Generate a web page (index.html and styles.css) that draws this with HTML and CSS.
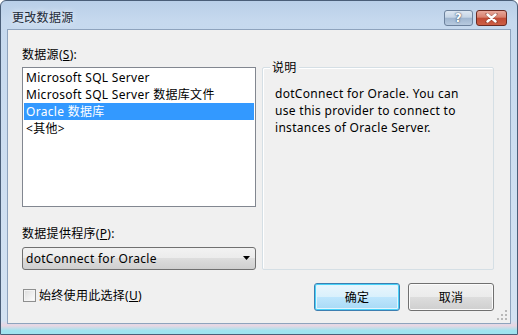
FILE: index.html
```html
<!DOCTYPE html>
<html lang="zh-CN">
<head>
    <meta charset="UTF-8">
    <title>更改数据源</title>
    <link rel="stylesheet" href="styles.css">
</head>
<body>
    <div class="window">
        <!-- Title bar -->
        <div class="titlebar">
            <div class="title">更改数据源</div>
            <div class="caption-buttons">
                <div class="cap-btn help">?</div>
                <div class="cap-btn close">
                    <svg width="13" height="10" viewBox="0 0 13 10">
                        <path d="M2 1 L11 9 M11 1 L2 9" stroke="#3b1a14" stroke-width="3.4" stroke-linecap="round" opacity="0.35"/>
                        <path d="M2.5 1.5 L10.5 8.5 M10.5 1.5 L2.5 8.5" stroke="#fff" stroke-width="2.4" stroke-linecap="round"/>
                    </svg>
                </div>
            </div>
        </div>

        <!-- Client area -->
        <div class="client">
            <div class="main">
                <div class="left-col">
                    <div class="label">数据源(<u>S</u>):</div>
                    <div class="listbox">
                        <div class="item">Microsoft SQL Server</div>
                        <div class="item">Microsoft SQL Server 数据库文件</div>
                        <div class="item selected">Oracle 数据库</div>
                        <div class="item">&lt;其他&gt;</div>
                    </div>
                    <div class="label provider-label">数据提供程序(<u>P</u>):</div>
                    <div class="combo">
                        <span>dotConnect for Oracle</span>
                        <svg width="8" height="5" viewBox="0 0 8 5"><path d="M0 0 H7 L3.5 4 Z" fill="#000"/></svg>
                    </div>
                </div>

                <div class="groupbox">
                    <div class="group-title">说明</div>
                    <div class="group-text">dotConnect for Oracle. You can use this provider to connect to instances of Oracle Server.</div>
                </div>
            </div>

            <div class="footer">
                <label class="check">
                    <span class="checkbox"></span>
                    <span>始终使用此选择(<u>U</u>)</span>
                </label>
                <div class="buttons">
                    <div class="btn default">确定</div>
                    <div class="btn">取消</div>
                </div>
            </div>

            <svg class="grip" width="11" height="11" viewBox="0 0 11 11">
                <g fill="#b8b8b8">
                    <rect x="8" y="0" width="2" height="2"/>
                    <rect x="4" y="4" width="2" height="2"/>
                    <rect x="8" y="4" width="2" height="2"/>
                    <rect x="0" y="8" width="2" height="2"/>
                    <rect x="4" y="8" width="2" height="2"/>
                    <rect x="8" y="8" width="2" height="2"/>
                </g>
            </svg>
        </div>
    </div>
</body>
</html>
```

FILE: styles.css
```css
body {
    margin: 0;
    width: 518px;
    height: 335px;
    overflow: hidden;
    background: #ffffff;
    font-family: "Noto Sans", "Noto Sans CJK SC", sans-serif;
    font-size: 12px;
    letter-spacing: 0.3px;
    color: #000;
}

.window {
    width: 518px;
    height: 335px;
    box-sizing: border-box;
    border: 1px solid #4a5e78;
    border-radius: 6px 6px 0 0;
    background: linear-gradient(to bottom, #b9cfe8 0%, #c6d9ee 20px, #cfdff1 60%, #d3e2f2 96%, #e9d6e2 97.5%, #9fe3ef 99%);
    padding: 0 6px 10px 6px;
    display: flex;
    flex-direction: column;
    position: relative;
}

/* Title bar */
.titlebar {
    height: 28px;
    display: flex;
    justify-content: space-between;
    align-items: flex-start;
    padding-left: 5px;
    padding-right: 4px;
}

.title {
    margin-top: 8px;
    line-height: 17px;
    color: #1e2a38;
    text-shadow: 0 0 6px rgba(255, 255, 255, 0.9);
}

.caption-buttons {
    display: flex;
    gap: 3px;
    margin-top: 9px;
}

.cap-btn {
    height: 16px;
    border-radius: 3px;
    display: flex;
    align-items: center;
    justify-content: center;
    box-sizing: border-box;
}

.cap-btn.help {
    width: 29px;
    border: 1px solid #6c819c;
    background: linear-gradient(to bottom, #dde7f2 0%, #c6d5e6 45%, #9fb5cf 50%, #b7cadf 100%);
    color: #fff;
    font-family: "DejaVu Sans", sans-serif;
    font-weight: bold;
    font-size: 12px;
    text-shadow: 0 0 2px #3a4e66, 0 0 1px #3a4e66;
}

.cap-btn.close {
    width: 31px;
    border: 1px solid #6b2a22;
    background: linear-gradient(to bottom, #e8a89b 0%, #d8806e 45%, #c14a34 50%, #cc5f45 100%);
}

/* Client area */
.client {
    flex: 1;
    background: #f0f0f0;
    border: 1px solid #8ea3bd;
    padding: 16px 15px 0 14px;
    position: relative;
    display: flex;
    flex-direction: column;
}

.main {
    display: flex;
    gap: 6px;
}

.left-col {
    width: 234px;
    display: flex;
    flex-direction: column;
}

.label {
    line-height: 17px;
    height: 17px;
    margin-bottom: 4px;
}

.provider-label {
    margin-top: 18px;
    margin-bottom: 5px;
}

.listbox {
    height: 140px;
    box-sizing: border-box;
    border: 1px solid #828790;
    background: #fff;
    padding: 1px;
}

.item {
    height: 17px;
    line-height: 17px;
    padding-left: 2px;
    white-space: nowrap;
}

.item.selected {
    background: #3399ff;
    color: #fff;
}

.combo {
    height: 23px;
    box-sizing: border-box;
    border: 1px solid #707070;
    border-radius: 3px;
    background: linear-gradient(to bottom, #f2f2f2 0%, #ebebeb 50%, #dddddd 50%, #cfcfcf 100%);
    display: flex;
    align-items: center;
    justify-content: space-between;
    padding: 0 4px 0 3px;
}

/* Description group */
.groupbox {
    width: 232px;
    height: 203px;
    margin-top: 21px;
    box-sizing: border-box;
    border: 1px solid #d5dfe5;
    box-shadow: inset 1px 1px 0 #ffffff;
    border-radius: 2px;
    position: relative;
    padding: 17px 24px 0 12px;
}

.group-title {
    position: absolute;
    top: -9px;
    left: 7px;
    padding: 0 2px;
    line-height: 17px;
    background: #f0f0f0;
}

.group-text {
    line-height: 17px;
}

/* Footer */
.footer {
    margin-top: 13px;
    display: flex;
    justify-content: space-between;
    align-items: center;
}

.check {
    display: flex;
    align-items: center;
    gap: 3px;
    margin-left: 1px;
    margin-top: -3px;
    line-height: 17px;
}

.checkbox {
    width: 13px;
    height: 13px;
    box-sizing: border-box;
    border: 1px solid #8e8f8f;
    background: linear-gradient(135deg, #dcdcdc 0%, #f4f4f4 70%, #ffffff 100%);
    box-shadow: inset 0 0 0 1px #f4f4f4;
}

.buttons {
    display: flex;
    gap: 8px;
    margin-right: 1px;
}

.btn {
    width: 86px;
    height: 28px;
    box-sizing: border-box;
    border: 1px solid #707070;
    border-radius: 3px;
    background: linear-gradient(to bottom, #f2f2f2 0%, #ebebeb 50%, #dddddd 50%, #cfcfcf 100%);
    box-shadow: inset 0 0 0 1px #fbfbfb;
    display: flex;
    align-items: center;
    justify-content: center;
}

.btn.default {
    border-color: #3c7fb1;
    background: linear-gradient(to bottom, #eaf6fd 0%, #d9f0fc 50%, #bee6fd 50%, #a7d9f5 100%);
    box-shadow: inset 0 0 0 1px #48d1f8, inset 0 0 0 2px #e2f5fd;
}

.grip {
    position: absolute;
    right: 2px;
    bottom: 2px;
}
```
